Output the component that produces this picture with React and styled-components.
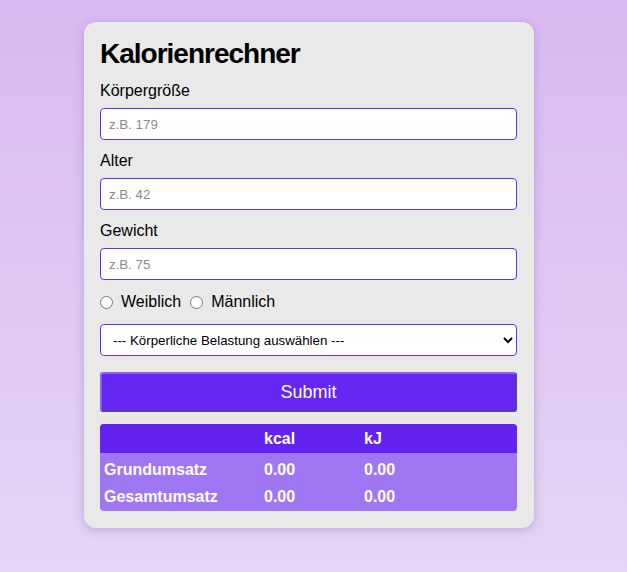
import React from "react";
import styled, { createGlobalStyle } from "styled-components";

const GlobalStyle = createGlobalStyle`
  html, body {
    margin: 0;
    min-height: 100%;
  }
  body {
    min-height: 572px;
    font-family: "Liberation Sans", Arial, sans-serif;
    background: linear-gradient(180deg, #d8b9f1 0%, #e5d4f6 100%);
  }
`;

const Page = styled.div`
  padding: 22px 0 40px 84px;
`;

const Card = styled.form`
  width: 450px;
  box-sizing: border-box;
  padding: 16px 17px 17px 16px;
  background: #e9e9e9;
  border-radius: 12px;
  box-shadow: 0 2px 8px rgba(80, 40, 120, 0.25);
  display: flex;
  flex-direction: column;
`;

const Title = styled.h1`
  margin: 0 0 12px;
  font-size: 28px;
  font-weight: bold;
  letter-spacing: -1px;
  color: #000;
  line-height: 32px;
`;

const Label = styled.label`
  display: block;
  font-size: 16px;
  line-height: 18px;
  margin-bottom: 8px;
  color: #000;
`;

const TextInput = styled.input`
  box-sizing: border-box;
  width: 100%;
  height: 32px;
  margin: 0 0 12px;
  padding: 0 8px;
  border: 1px solid #6a2cf0;
  border-radius: 4px;
  background: #fff;
  font-family: "Liberation Sans", Arial, sans-serif;
  font-size: 13.3px;
  &::placeholder {
    color: #8a8a8a;
  }
`;

const RadioRow = styled.div`
  display: flex;
  align-items: center;
  gap: 9px;
  height: 18px;
  margin: 1px 0 13px;
  font-size: 16px;
`;

const RadioOption = styled.label`
  display: flex;
  align-items: center;
  gap: 8px;
  input {
    margin: 0;
    width: 13px;
    height: 13px;
  }
`;

const Select = styled.select`
  box-sizing: border-box;
  width: 100%;
  height: 32px;
  margin-bottom: 16px;
  padding: 0 8px;
  border: 1px solid #6a2cf0;
  border-radius: 4px;
  background: #fff;
  color: #000;
  font-family: "Liberation Sans", Arial, sans-serif;
  font-size: 13.3px;
`;

const SubmitButton = styled.button`
  box-sizing: border-box;
  width: 100%;
  height: 40px;
  margin-bottom: 12px;
  border: 2px outset #8a63f2;
  border-radius: 3px;
  background: #6526f1;
  color: #fff;
  font-family: "Liberation Sans", Arial, sans-serif;
  font-size: 18px;
`;

const Table = styled.table`
  width: 100%;
  border-collapse: separate;
  border-spacing: 0;
  border-radius: 4px;
  overflow: hidden;
  color: #fff;
  font-size: 16px;
  font-weight: bold;
  background: #a077f3;
`;

const HeadRow = styled.tr`
  background: #6422f1;
`;

const Cell = styled.td`
  box-sizing: border-box;
  height: 29px;
  padding: ${(props) => (props.$top ? "5px 4px 0" : "0 4px")};
  text-align: left;
  width: ${(props) => props.$w || "auto"};
`;

const rows = [
  { name: "Grundumsatz", kcal: "0.00", kj: "0.00", top: true },
  { name: "Gesamtumsatz", kcal: "0.00", kj: "0.00", top: false },
];

export default function App() {
  return (
    <Page>
      <GlobalStyle />
      <Card onSubmit={(e) => e.preventDefault()}>
        <Title>Kalorienrechner</Title>
        <Label htmlFor="groesse">Körpergröße</Label>
        <TextInput id="groesse" placeholder="z.B. 179" />
        <Label htmlFor="alter">Alter</Label>
        <TextInput id="alter" placeholder="z.B. 42" />
        <Label htmlFor="gewicht">Gewicht</Label>
        <TextInput id="gewicht" placeholder="z.B. 75" />
        <RadioRow>
          <RadioOption>
            <input type="radio" name="geschlecht" />
            Weiblich
          </RadioOption>
          <RadioOption>
            <input type="radio" name="geschlecht" />
            Männlich
          </RadioOption>
        </RadioRow>
        <Select defaultValue="">
          <option value="">--- Körperliche Belastung auswählen ---</option>
        </Select>
        <SubmitButton type="submit">Submit</SubmitButton>
        <Table>
          <thead>
            <HeadRow>
              <Cell as="th" $w="160px"></Cell>
              <Cell as="th" $w="100px">kcal</Cell>
              <Cell as="th">kJ</Cell>
            </HeadRow>
          </thead>
          <tbody>
            {rows.map((r) => (
              <tr key={r.name}>
                <Cell $top={r.top}>{r.name}</Cell>
                <Cell $top={r.top}>{r.kcal}</Cell>
                <Cell $top={r.top}>{r.kj}</Cell>
              </tr>
            ))}
          </tbody>
        </Table>
      </Card>
    </Page>
  );
}
